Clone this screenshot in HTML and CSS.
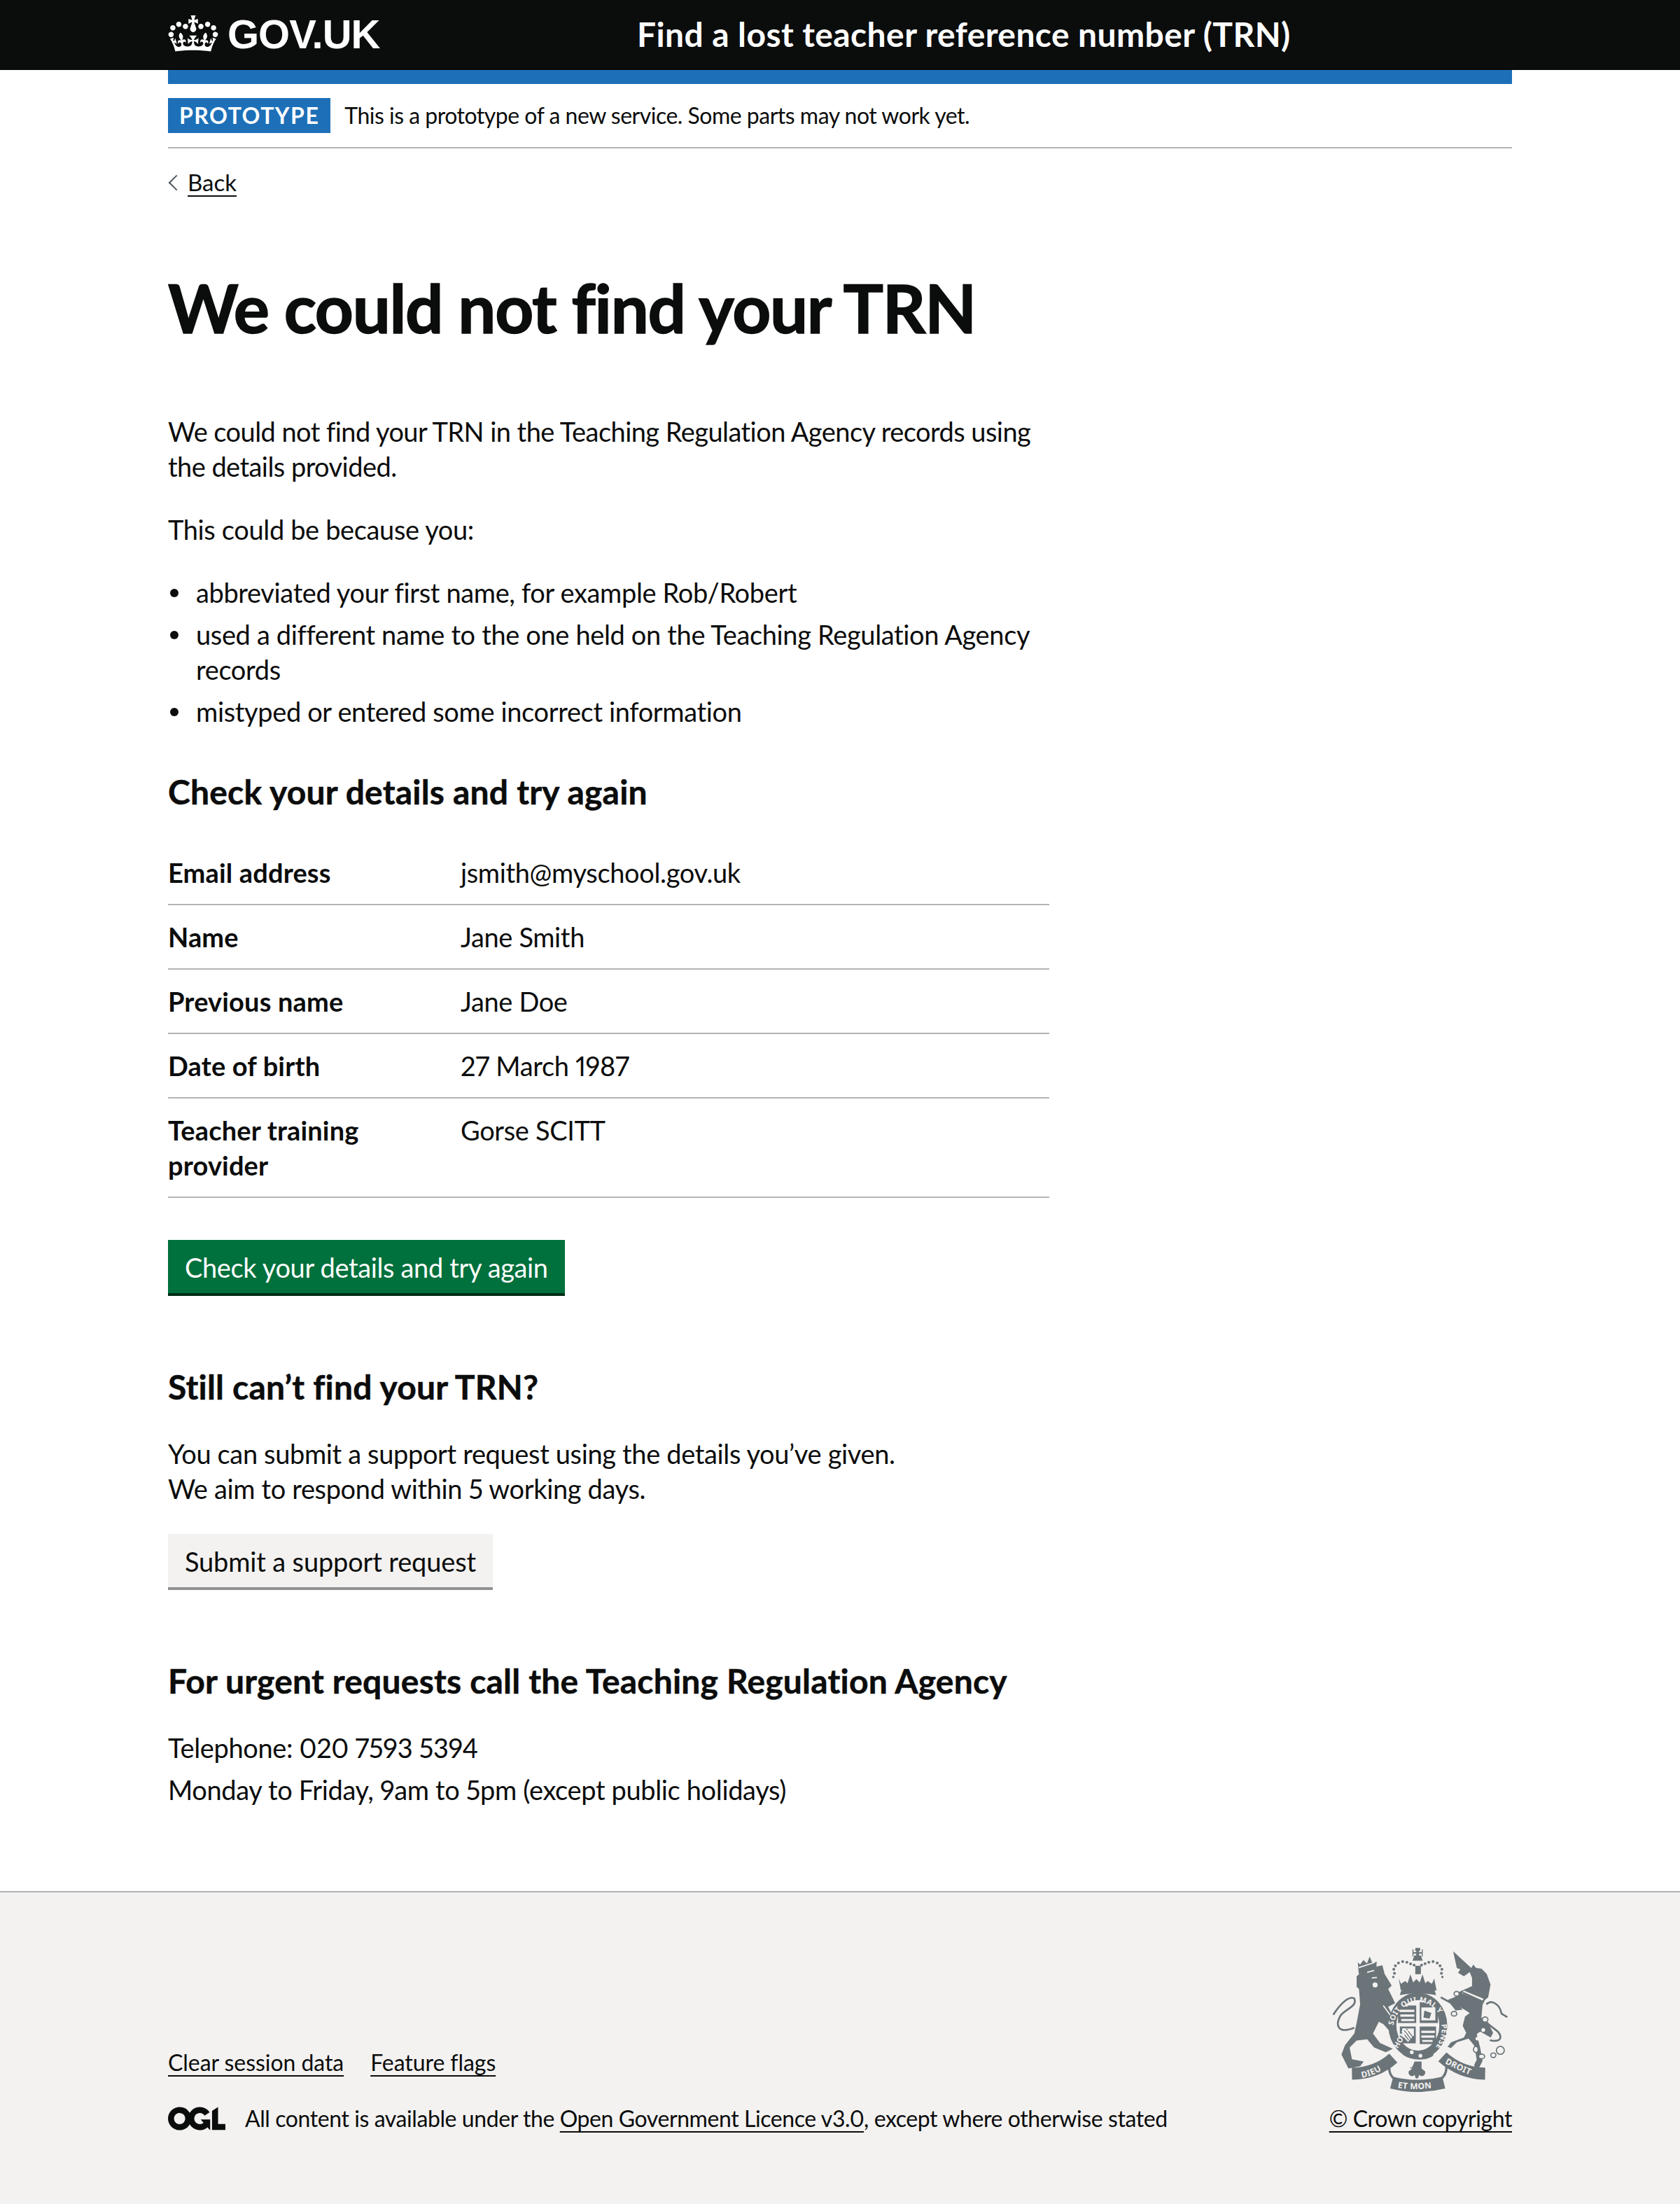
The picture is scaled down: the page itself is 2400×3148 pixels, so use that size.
FILE: index.html
```html
<!DOCTYPE html>
<html lang="en">
<head>
<meta charset="utf-8">
<title>We could not find your TRN</title>
<link rel="stylesheet" href="styles.css">
</head>
<body>
<header class="site-header">
  <div class="container header-inner">
    <a class="logo" href="#">
      <svg class="crown" viewBox="0 0 132 97" aria-hidden="true"><path fill="currentColor" fill-rule="evenodd" d="M25 30.2c3.5 1.5 7.7-.2 9.1-3.7 1.5-3.6-.2-7.8-3.9-9.2-3.6-1.4-7.6.3-9.1 3.9-1.4 3.5.3 7.5 3.9 9zM9 39.5c3.6 1.5 7.8-.2 9.2-3.7 1.5-3.6-.2-7.8-3.9-9.1-3.6-1.5-7.6.2-9.1 3.8-1.4 3.5.3 7.5 3.8 9zM4.4 57.2c3.5 1.5 7.7-.2 9.1-3.8 1.5-3.6-.2-7.7-3.9-9.1-3.5-1.5-7.6.3-9.1 3.8-1.4 3.5.3 7.6 3.9 9.1zm38.3-21.4c3.5 1.5 7.7-.2 9.1-3.8 1.5-3.6-.2-7.7-3.9-9.1-3.6-1.5-7.6.3-9.1 3.8-1.3 3.6.4 7.7 3.9 9.1zm64.4-5.6c-3.6 1.5-7.8-.2-9.1-3.7-1.5-3.6.2-7.8 3.8-9.2 3.6-1.4 7.7.3 9.2 3.9 1.3 3.5-.4 7.5-3.9 9zm15.9 9.3c-3.6 1.5-7.7-.2-9.1-3.7-1.5-3.6.2-7.8 3.7-9.1 3.6-1.5 7.7.2 9.2 3.8 1.5 3.5-.3 7.5-3.8 9zm4.7 17.7c-3.6 1.5-7.8-.2-9.2-3.8-1.5-3.6.2-7.7 3.9-9.1 3.6-1.5 7.7.3 9.2 3.8 1.3 3.5-.4 7.6-3.9 9.1zM89.3 35.8c-3.6 1.5-7.8-.2-9.2-3.8-1.4-3.6.2-7.7 3.9-9.1 3.6-1.5 7.7.3 9.2 3.8 1.4 3.6-.3 7.7-3.9 9.1zM69.7 17.7l8.9 4.7V9.3l-8.9 2.8c-.2-.3-.5-.6-.9-.9L72.4 0H59.6l3.5 11.2c-.3.3-.6.5-.9.9l-8.8-2.8v13.1l8.8-4.7c.3.3.6.7.9.9l-5 15.4v.1c-.2.8-.4 1.6-.4 2.4 0 4.1 3.1 7.5 7 8.1h.2c.3 0 .7.1 1 .1.4 0 .7 0 1-.1h.2c4-.6 7.1-4.1 7.1-8.1 0-.8-.1-1.7-.4-2.4V34l-5.1-15.4c.4-.2.7-.6 1-.9zM66 92.8c16.9 0 32.8 1.1 47.1 3.2 4-16.9 8.9-26.7 14-33.5l-9.6-3.4c1 4.9 1.1 7.2 0 10.2-1.5-1.4-3-4.3-4.2-8.7L108.6 76c2.8-2 5-3.2 7.5-3.3-4.4 9.4-10 11.9-13.6 11.2-4.3-.8-6.3-4.6-5.6-7.9 1-4.7 5.7-5.9 8-.5 4.3-8.7-3-11.4-7.6-8.8 7.1-7.2 7.9-13.5 2.1-21.1-8 6.1-8.1 12.3-4.5 20.8-4.7-5.4-12.1-2.5-9.5 6.2 3.4-5.2 7.9-2 7.2 3.1-.6 4.3-6.4 7.8-13.5 7.2-10.3-.9-10.9-8-11.2-13.8 2.5-.5 7.1 1.8 11 7.3L80.2 60c-4.1 4.4-8 5.3-12.3 5.4 1.4-4.4 8-11.6 8-11.6H55.5s6.4 7.2 7.9 11.6c-4.2-.1-8-1-12.3-5.4l1.4 16.4c3.9-5.5 8.5-7.7 10.9-7.3-.3 5.8-.9 12.8-11.1 13.8-7.2.6-12.9-2.9-13.5-7.2-.7-5 3.8-8.3 7.1-3.1 2.7-8.7-4.6-11.6-9.4-6.2 3.7-8.5 3.6-14.7-4.6-20.8-5.8 7.6-5 13.9 2.2 21.1-4.7-2.6-11.9.1-7.7 8.8 2.3-5.5 7.1-4.2 8.1.5.7 3.3-1.3 7.1-5.7 7.9-3.5.7-9-1.8-13.5-11.2 2.5.1 4.7 1.3 7.5 3.3l-4.7-15.4c-1.2 4.4-2.7 7.2-4.3 8.7-1.1-3-.9-5.3 0-10.2l-9.5 3.4c5 6.9 9.9 16.7 14 33.5 14.8-2.1 30.8-3.2 47.7-3.2z"/></svg>
      <span class="logo-text">GOV.UK</span>
    </a>
    <a class="service-name" href="#">Find a lost teacher reference number (TRN)</a>
  </div>
</header>

<div class="container">
  <div class="blue-bar"></div>
  <div class="phase-banner">
    <strong class="tag">Prototype</strong>
    <span class="phase-text">This is a prototype of a new service. Some parts may not work yet.</span>
  </div>
  <a class="back-link" href="#">Back</a>

  <main class="main">
    <h1 class="title">We could not find your TRN</h1>
    <p class="body body-lead">We could not find your TRN in the Teaching Regulation Agency records using the details provided.</p>
    <p class="body">This could be because you:</p>
    <ul class="list">
      <li>abbreviated your first name, for example Rob/Robert</li>
      <li>used a different name to the one held on the Teaching Regulation Agency records</li>
      <li>mistyped or entered some incorrect information</li>
    </ul>
    <h2 class="heading">Check your details and try again</h2>
    <dl class="summary">
      <div class="summary-row"><dt>Email address</dt><dd>jsmith@myschool.gov.uk</dd></div>
      <div class="summary-row"><dt>Name</dt><dd>Jane Smith</dd></div>
      <div class="summary-row"><dt>Previous name</dt><dd>Jane Doe</dd></div>
      <div class="summary-row"><dt>Date of birth</dt><dd>27 March 1987</dd></div>
      <div class="summary-row"><dt>Teacher training provider</dt><dd>Gorse SCITT</dd></div>
    </dl>
    <a class="button button-primary" href="#">Check your details and try again</a>
    <h2 class="heading">Still can’t find your TRN?</h2>
    <p class="body">You can submit a support request using the details you’ve given.<br>We aim to respond within 5 working days.</p>
    <a class="button button-secondary" href="#">Submit a support request</a>
    <h2 class="heading">For urgent requests call the Teaching Regulation Agency</h2>
    <p class="body body-tight">Telephone: 020 7593 5394</p>
    <p class="body body-last">Monday to Friday, 9am to 5pm (except public holidays)</p>
  </main>
</div>

<footer class="footer">
  <div class="container footer-inner">
    <div class="footer-left">
      <ul class="footer-links">
        <li><a href="#">Clear session data</a></li>
        <li><a href="#">Feature flags</a></li>
      </ul>
      <div class="licence">
        <svg class="ogl" viewBox="0 0 483.2 195.7" aria-hidden="true"><path fill="currentColor" d="M421.5 142.8V.1l-50.7 32.3v161.1h112.4v-50.7zm-122.3-9.6A47.12 47.12 0 0 1 221 97.8c0-26 21.1-47.1 47.1-47.1 16.7 0 31.4 8.7 39.7 21.8l42.7-27.2A97.63 97.63 0 0 0 268.1 0c-36.5 0-68.3 20.1-85.1 49.7A98 98 0 0 0 97.8 0C43.9 0 0 43.9 0 97.8s43.9 97.8 97.8 97.8c36.5 0 68.3-20.1 85.1-49.7a97.76 97.76 0 0 0 149.6 25.4l19.4 22.2h3v-87.8h-80l24.3 27.5zM97.8 145c-26 0-47.1-21.1-47.1-47.1s21.1-47.1 47.1-47.1 47.2 21 47.2 47S123.8 145 97.8 145"/></svg>
        <span>All content is available under the <a href="#">Open Government Licence v3.0</a>, except where otherwise stated</span>
      </div>
    </div>
    <div class="footer-right">
      <svg class="crest" viewBox="130 100 755 620" aria-hidden="true">
        <defs>
          <path id="garter-top" d="M392 470 A108 118 0 1 1 606 470"/>
          <path id="garter-right" d="M597 425 A108 118 0 0 1 555 545"/>
          <path id="rib-left" d="M258 660 Q320 648 375 605"/>
          <path id="rib-mid" d="M410 702 Q495 716 585 698"/>
          <path id="rib-right" d="M612 597 Q680 632 745 658"/>
        </defs>
        <g class="crest-fill">
          <path d="M487 104h20v12h-5v6h12v-12h4v30h-4v-12h-12v8h8l8 22h-44l8-22h8v-8h-12v12h-4v-30h4v12h12v-6h-5z"/>
          <path d="M486 180h24v36h-24z"/>
          <path d="M415 235l10 22 18-12 10 10 12-38 12 34 14-14 14 14 12-34 12 38 10-10 18 12 10-22 10 50c-35 10-118 10-153 0z"/>
          <path d="M425 288c30-10 115-10 145 0l5 18c-40-10-115-10-155 0z"/>
          <circle cx="397" cy="212" r="6"/><circle cx="394" cy="195" r="6"/><circle cx="401" cy="180" r="6"/><circle cx="414" cy="168" r="6"/><circle cx="432" cy="162" r="6"/><circle cx="450" cy="165" r="6"/><circle cx="466" cy="172" r="6"/><circle cx="481" cy="177" r="6"/><circle cx="513" cy="177" r="6"/><circle cx="528" cy="171" r="6"/><circle cx="544" cy="165" r="6"/><circle cx="562" cy="162" r="6"/><circle cx="580" cy="168" r="6"/><circle cx="592" cy="180" r="6"/><circle cx="600" cy="195" r="6"/><circle cx="598" cy="212" r="6"/><circle cx="392" cy="228" r="5"/><circle cx="602" cy="228" r="5"/>
          <path d="M235 225l35-30 75-17 10 37 30 50-15 15 15 30 15 30-30 15 25 50 10 35-20 30-35-40-20-10-25 50 30 40 55 25-30 15-50-20-30-35-45 5-30 30 10 50 50 10-15 20-50 10-30-60 15-40 40-50 10-45 15-80-5-65-10-10z"/>
          <path d="M240 165l10 10 14-20 15 15 12-30 12 30 18-8-2 28-75 25z"/>
        </g>
        <circle class="crest-bg" cx="314" cy="262" r="11"/>
        <path class="crest-line" d="M280 208l30-8M300 232l22-2M349 350l50 68M244 188l68-22"/>
        <path class="crest-stroke" d="M225 445C150 475 145 430 165 395c20-30 75-40 60-75-20-12-55 15-90 70"/>
        <ellipse class="crest-fill" cx="497" cy="437" rx="126" ry="142"/>
        <ellipse class="crest-bg" cx="497" cy="435" rx="92" ry="108"/>
        <g class="crest-fill">
          <path d="M412 350h78v75h-78z"/><path d="M505 335h78v90h-78z"/><path d="M420 440h68v72h-68z"/><path d="M505 440h70v75h-70z"/>
        </g>
        <g class="crest-bg">
          <path d="M420 368h62v10h-62zM422 388h60v10h-60zM426 408h56v9h-56zM512 358h60v56h-60zM512 458h58v10h-58zM512 478h56v10h-56zM516 498h44v8h-44z"/>
          <path d="M430 448h50v30l-25 28-25-28z"/>
        </g>
        <path class="crest-fill" d="M525 372l30 10-8 24-26-4z"/>
        <path class="crest-line thin" d="M438 455l30 40M448 450l28 36M436 470l22 28"/>
        <text class="garter-text"><textPath href="#garter-top" startOffset="9%">SOIT QUI MAL Y</textPath></text>
        <text class="garter-text"><textPath href="#garter-right" startOffset="4%">PENSE</textPath></text>
        <text class="garter-text" transform="rotate(-60 420 500)" x="385" y="510">HONI</text>
        <path class="crest-fill" d="M425 530c40 40 110 45 145 5l-8 30c-30 25-100 20-130-5z"/>
        <circle class="crest-bg" cx="471" cy="550" r="8"/><circle class="crest-bg" cx="508" cy="565" r="8"/>
        <path class="crest-fill" d="M648 118l78 72 8-15 12 14 24 4 22 22 16 45-10 55-14 12-10 20-5 55 25 15 25 50-10 20-45-25-15 10 15 60 10 55-15 30-20 10 0-25 10-20-10-60-25-30-50 15-25 25-15-5 15-20 55-20 10-20-15-30 10-40 20-15-40-25 10 10-30 5-35-45 35-15 15-20 55-25 0-35-10-25-25 18-25-15 10-15-15-5z"/>
        <path class="crest-bgline" d="M690 292l85 35"/>
        <path class="crest-stroke" d="M690 295l88 40M595 315l55 30"/>
        <path class="crest-stroke" d="M790 420c25 30 65 40 60 70-5 15-35 12-45 8M790 345c25-25 60 5 65 40l25 15"/>
        <g class="crest-ring">
          <ellipse cx="663" cy="300" rx="11" ry="10"/><ellipse cx="652" cy="385" rx="12" ry="10"/><ellipse cx="785" cy="410" rx="12" ry="11"/><ellipse cx="745" cy="538" rx="10" ry="13"/><ellipse cx="770" cy="568" rx="13" ry="10"/><ellipse cx="820" cy="563" rx="11" ry="10"/><ellipse cx="850" cy="542" rx="17" ry="17"/>
        </g>
        <circle class="crest-bg" cx="777" cy="455" r="8"/><circle class="crest-bg" cx="752" cy="492" r="8"/>
        <path class="crest-ribbon" d="M215 642Q320 640 392 575"/>
        <path class="crest-ribbon" d="M785 642Q680 640 602 570"/>
        <path class="crest-ribbon" d="M385 680Q495 708 608 680"/>
        <path class="crest-fold" d="M378 598Q365 640 400 668M615 590Q630 640 592 668"/>
        <path class="crest-fill" d="M483 590h30v30l15 12c5 15-15 28-25 15l-5 15h-10l-5-15c-10 13-30 0-25-15l15-12-12-3 12-3z"/>
        <text class="ribbon-text"><textPath href="#rib-left">DIEU</textPath></text>
        <text class="ribbon-text"><textPath href="#rib-mid">ET MON</textPath></text>
        <text class="ribbon-text"><textPath href="#rib-right">DROIT</textPath></text>
      </svg>
      <a class="copyright" href="#">© Crown copyright</a>
    </div>
  </div>
</footer>
</body>
</html>
```
FILE: styles.css
```css
* { box-sizing: border-box; }
html, body { margin: 0; padding: 0; }
body {
  display: flex;
  flex-direction: column;
  min-height: 100vh;
  font-family: Lato, "Noto Sans", "Liberation Sans", sans-serif;
  color: #0b0c0c;
  background: #fff;
  font-size: 38px;
  line-height: 50px;
  letter-spacing: -0.36px;
  font-variant-numeric: proportional-nums;
}
a { color: inherit; text-decoration: underline; text-decoration-thickness: 2px; text-underline-offset: 6px; }
.container { width: 1920px; margin: 0 auto; }

.site-header { background: #0b0c0c; height: 100px; color: #fff; }
.header-inner { display: flex; align-items: center; height: 100px; }
.logo { display: flex; align-items: center; width: 670px; color: #fff; text-decoration: none; }
.crown { width: 72px; height: 52px; margin-right: 13px; margin-top: -4px; }
.logo-text { font-family: "Liberation Sans", sans-serif; font-weight: 700; font-size: 58px; line-height: 60px; letter-spacing: -1px; margin-top: -2px; }
.service-name { color: #fff; font-weight: 700; font-size: 48px; line-height: 60px; letter-spacing: 0.4px; text-decoration: none; margin-top: -2px; }

.blue-bar { height: 20px; background: #1d70b8; }
.phase-banner { display: flex; align-items: center; height: 92px; border-bottom: 2px solid #b1b4b6; font-size: 32px; line-height: 50px; letter-spacing: -0.5px; }
.tag { background: #1d70b8; color: #fff; font-weight: 700; font-size: 32px; line-height: 50px; height: 50px; padding: 0 16px; letter-spacing: 1.5px; text-transform: uppercase; margin-right: 20px; }

.back-link { display: inline-block; position: relative; margin-top: 28px; padding-left: 28px; font-size: 33px; line-height: 40px; letter-spacing: 0; }
.back-link::before { content: ""; position: absolute; left: 4px; top: 13px; width: 14px; height: 14px; border-left: 2px solid #505a5f; border-bottom: 2px solid #505a5f; transform: rotate(45deg); }

.main { width: 1259px; padding-top: 108px; padding-bottom: 120px; }
.title { margin: -2px 0 102px; font-size: 96px; line-height: 100px; font-weight: 700; letter-spacing: -1.3px; -webkit-text-stroke: 1.5px #0b0c0c; }
.body { margin: 0 0 40px; }
.body-lead { letter-spacing: -0.56px; }
.body-tight { margin-bottom: 10px; }
.body-last { margin-bottom: 0; }
.list { margin: 0 0 60px; padding: 0 0 0 40px; list-style: none; }
.list li { position: relative; margin-bottom: 10px; }
.list li::before { content: ""; position: absolute; left: -37px; top: 20px; width: 12px; height: 12px; border-radius: 50%; background: #0b0c0c; }
.list li:last-child { margin-bottom: 0; }
.heading { margin: 0 0 40px; font-size: 48px; line-height: 60px; font-weight: 700; letter-spacing: 0.2px; -webkit-text-stroke: 0.5px #0b0c0c; }

.summary { margin: 0 0 60px; }
.summary-row { display: flex; border-bottom: 2px solid #b1b4b6; padding: 20px 0; }
.summary-row dt { width: 418px; padding-right: 40px; font-weight: 700; letter-spacing: 0.15px; }
.summary-row dd { margin: 0; flex: 1; }

.button { display: block; width: max-content; height: 80px; padding: 14px 24px 0; line-height: 50px; text-decoration: none; margin-bottom: 100px; }
.button-primary { background: #00703c; color: #fff; box-shadow: inset 0 -4px 0 #002d18; }
.button-secondary { background: #f3f2f1; color: #0b0c0c; box-shadow: inset 0 -4px 0 #929191; letter-spacing: -0.16px; }

.footer { flex: 1; background: #f3f2f1; border-top: 2px solid #b1b4b6; font-size: 32px; line-height: 40px; letter-spacing: -0.42px; }
.footer-inner { display: flex; justify-content: space-between; align-items: flex-end; padding: 78px 0 100px; }
.footer-links { display: flex; gap: 38px; list-style: none; margin: 0 0 40px; padding: 0; letter-spacing: -0.06px; }
.licence { display: flex; align-items: center; gap: 28px; }
.ogl { width: 82px; height: 34px; }
.footer-right { display: flex; flex-direction: column; align-items: center; }
.crest { width: 252px; height: 207px; margin-bottom: 18px; display: block; }
.crest-fill { fill: #6b7478; }
.crest-bg { fill: #f3f2f1; }
.crest-stroke { fill: none; stroke: #6b7478; stroke-width: 8; }
.crest-line { fill: none; stroke: #f3f2f1; stroke-width: 5; }
.crest-line.thin { stroke: #6b7478; stroke-width: 4; }
.crest-bgline { fill: none; stroke: #f3f2f1; stroke-width: 14; }
.crest-ring { fill: #f3f2f1; stroke: #6b7478; stroke-width: 5; }
.crest-ribbon { fill: none; stroke: #6b7478; stroke-width: 52; }
.crest-fold { fill: none; stroke: #6b7478; stroke-width: 10; }
.garter-text { font-family: "Noto Sans", sans-serif; font-size: 32px; font-weight: 700; fill: #f3f2f1; letter-spacing: 1px; }
.ribbon-text { font-family: "Noto Sans", sans-serif; font-size: 36px; font-weight: 700; fill: #f3f2f1; letter-spacing: 1px; }
```
